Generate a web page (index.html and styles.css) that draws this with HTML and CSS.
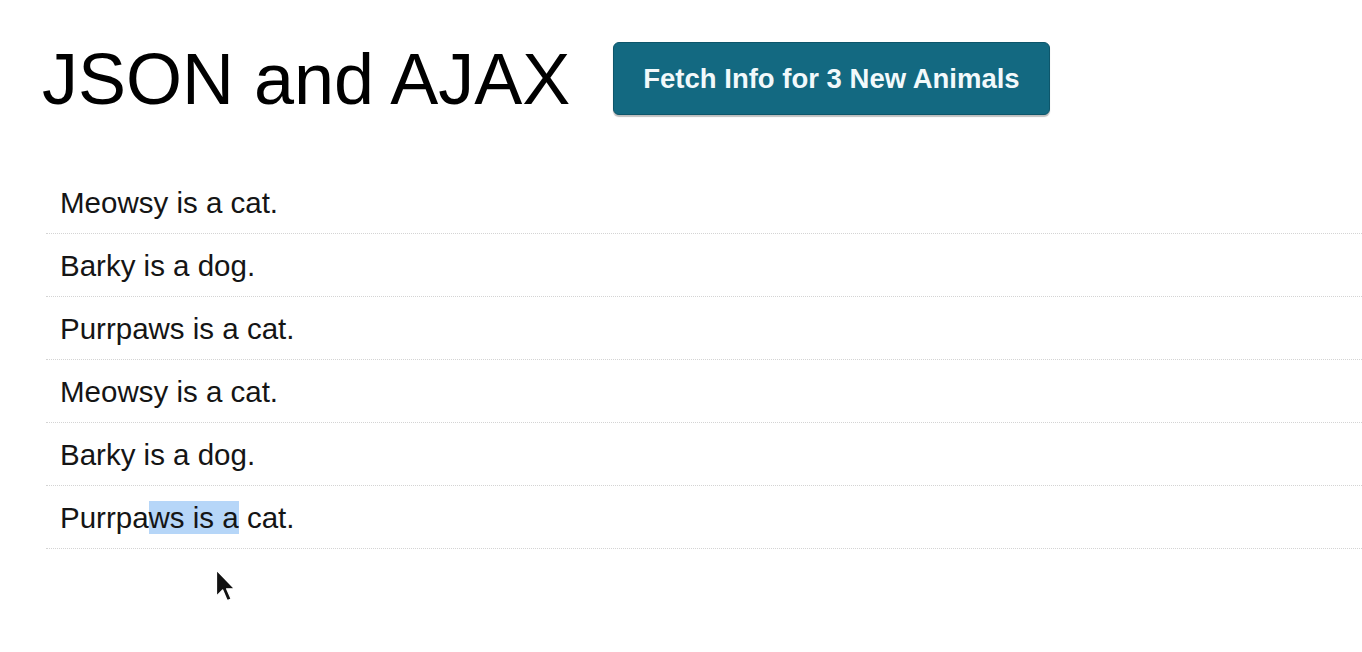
FILE: index.html
```html
<!DOCTYPE html>
<html lang="en">
<head>
<meta charset="utf-8">
<title>JSON and AJAX</title>
<link rel="stylesheet" href="styles.css">
</head>
<body>
<div class="page">
  <header class="header">
    <h1 class="title">JSON and AJAX</h1>
    <button class="fetch-btn" type="button">Fetch Info for 3 New Animals</button>
  </header>
  <ul class="animal-list">
    <li class="animal">Meowsy is a cat.</li>
    <li class="animal">Barky is a dog.</li>
    <li class="animal">Purrpaws is a cat.</li>
    <li class="animal">Meowsy is a cat.</li>
    <li class="animal">Barky is a dog.</li>
    <li class="animal">Purrpa<span class="sel">ws is a</span> cat.</li>
  </ul>
  <svg class="cursor" width="21" height="34" viewBox="0 0 18 30" aria-hidden="true">
    <path d="M1 1 L1 24 L6.5 18.5 L10.5 28 L14 26.5 L10 17.5 L17 17.5 Z" fill="#111" stroke="#fff" stroke-width="1.2" stroke-linejoin="round"/>
  </svg>
</div>
</body>
</html>
```

FILE: styles.css
```css
html, body {
  margin: 0;
  padding: 0;
  background: #ffffff;
}

body {
  font-family: "Liberation Sans", Arial, Helvetica, sans-serif;
  color: #1a1a1a;
}

.page {
  position: relative;
  min-height: 652px;
  overflow: hidden;
}

.header {
  display: flex;
  align-items: flex-start;
  gap: 43px;
  padding: 42px 0 0 42px;
  height: 73px;
}

.title {
  margin: 1px 0 0 0;
  font-size: 72px;
  line-height: 72px;
  font-weight: 400;
  color: #000;
  white-space: nowrap;
}

.fetch-btn {
  height: 73px;
  padding: 0 29px;
  border: 1px solid #0d566b;
  border-radius: 6px;
  background: #136981;
  color: #f2f9fb;
  font-family: "Liberation Sans", Arial, Helvetica, sans-serif;
  font-size: 27.5px;
  font-weight: 700;
  white-space: nowrap;
  box-shadow: 0 2px 1px rgba(0, 0, 0, 0.25);
  cursor: pointer;
}

.animal-list {
  list-style: none;
  margin: 56px 0 0 46px;
  padding: 0;
}

.animal {
  padding: 14.5px 14px;
  font-size: 29.5px;
  line-height: 33px;
  color: #151515;
  border-bottom: 1px dotted #d4d4d4;
}

.sel {
  background: #b6d6f8;
}

.cursor {
  position: absolute;
  left: 215px;
  top: 569px;
}
```
